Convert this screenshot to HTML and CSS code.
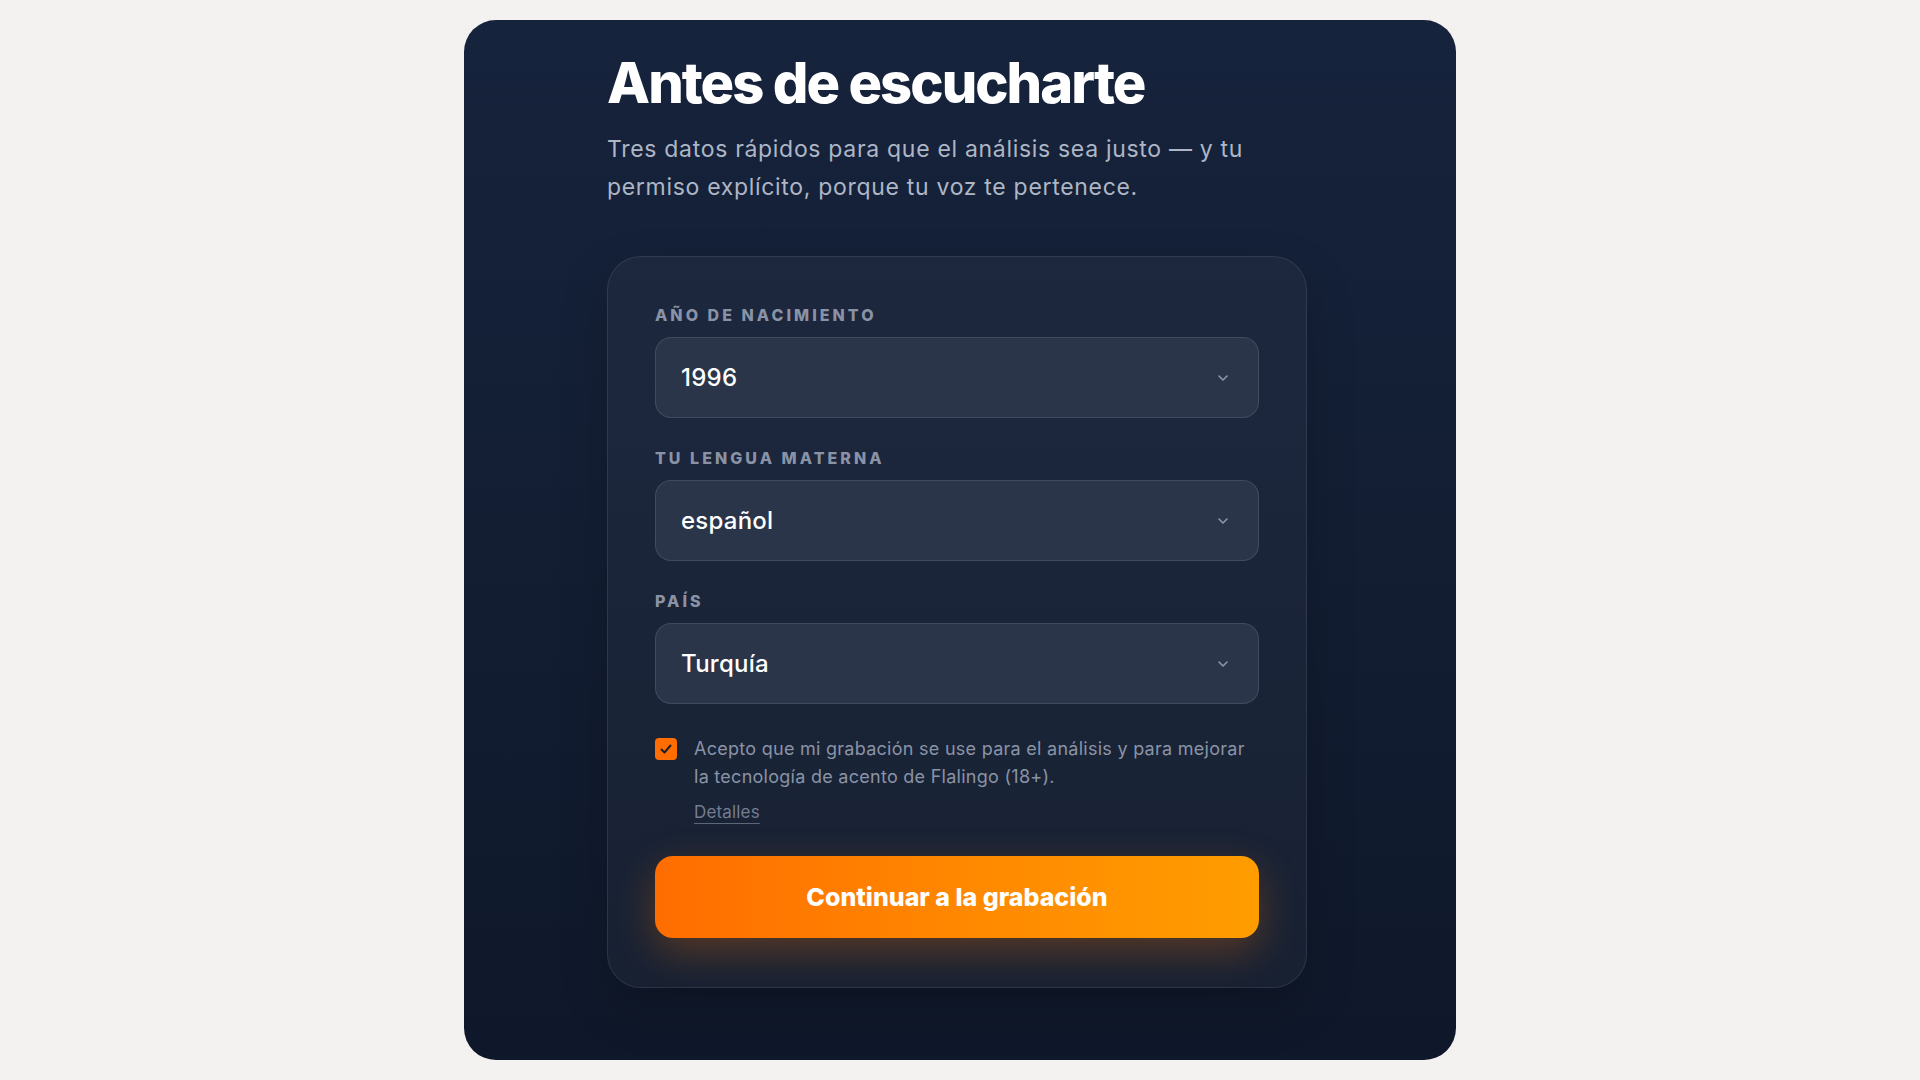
FILE: index.html
```html
<!DOCTYPE html>
<html lang="es">
<head>
    <meta charset="utf-8" />
    <title>Antes de escucharte</title>
    <link rel="stylesheet" href="styles.css">
</head>
<body>
    <div class="screen">
        <div class="content">
            <h1>Antes de escucharte</h1>
            <p class="subtitle">Tres datos rápidos para que el análisis sea justo — y tu permiso explícito, porque tu voz te pertenece.</p>

            <div class="form-card">
                <div class="field">
                    <label>Año de nacimiento</label>
                    <div class="select">
                        <span>1996</span>
                        <svg class="chevron" viewBox="0 0 12 8" width="12" height="8"><path d="M2 2l4 4 4-4" fill="none" stroke="currentColor" stroke-width="1.6" stroke-linecap="round" stroke-linejoin="round"/></svg>
                    </div>
                </div>

                <div class="field">
                    <label>Tu lengua materna</label>
                    <div class="select">
                        <span>español</span>
                        <svg class="chevron" viewBox="0 0 12 8" width="12" height="8"><path d="M2 2l4 4 4-4" fill="none" stroke="currentColor" stroke-width="1.6" stroke-linecap="round" stroke-linejoin="round"/></svg>
                    </div>
                </div>

                <div class="field">
                    <label>País</label>
                    <div class="select">
                        <span>Turquía</span>
                        <svg class="chevron" viewBox="0 0 12 8" width="12" height="8"><path d="M2 2l4 4 4-4" fill="none" stroke="currentColor" stroke-width="1.6" stroke-linecap="round" stroke-linejoin="round"/></svg>
                    </div>
                </div>

                <div class="consent">
                    <span class="checkbox">
                        <svg viewBox="0 0 16 16" width="16" height="16"><path d="M3.5 8.5l3 3 6-7" fill="none" stroke="#1a1f2b" stroke-width="2" stroke-linecap="round" stroke-linejoin="round"/></svg>
                    </span>
                    <div class="consent-text">
                        <p>Acepto que mi grabación se use para el análisis y para mejorar la tecnología de acento de Flalingo (18+).</p>
                        <a href="#" class="details">Detalles</a>
                    </div>
                </div>

                <button class="primary">Continuar a la grabación</button>
            </div>
        </div>
    </div>
</body>
</html>
```

FILE: styles.css
```css
:root {
    --page-bg: #f3f2f0;
    --card-top: #16233c;
    --card-bottom: #0f182a;
    --panel: rgba(255, 255, 255, 0.035);
    --panel-border: rgba(255, 255, 255, 0.09);
    --field: #2a354a;
    --field-border: rgba(255, 255, 255, 0.11);
    --text: #ffffff;
    --text-soft: #aeb6c6;
    --text-muted: #8a93a6;
    --orange: #ff6d00;
    --orange-light: #ff9d00;
}

* {
    box-sizing: border-box;
    margin: 0;
    padding: 0;
}

body {
    background: var(--page-bg);
    font-family: Inter, "Open Sans", sans-serif;
    color: var(--text);
    min-height: 100vh;
}

.screen {
    width: 992px;
    height: 1040px;
    margin: 20px auto;
    border-radius: 32px;
    background: linear-gradient(180deg, var(--card-top) 0%, #131e33 50%, var(--card-bottom) 100%);
    padding: 30px 6px 0 0;
    overflow: hidden;
}

.content {
    width: 700px;
    margin: 0 auto;
}

h1 {
    font-size: 56px;
    font-weight: 800;
    letter-spacing: -0.035em;
    line-height: 1.2;
}

.subtitle {
    margin-top: 13px;
    max-width: 650px;
    font-size: 23px;
    line-height: 38px;
    color: var(--text-soft);
    letter-spacing: 0.03em;
}

.form-card {
    margin-top: 50px;
    padding: 48px 47px 49px;
    background: var(--panel);
    border: 1px solid var(--panel-border);
    border-radius: 34px;
    box-shadow: 0 20px 50px rgba(0, 0, 0, 0.18);
}

.field {
    margin-bottom: 30px;
}

.field label {
    display: block;
    font-size: 16px;
    font-weight: 800;
    letter-spacing: 0.19em;
    text-transform: uppercase;
    color: var(--text-muted);
    line-height: 20px;
    margin-bottom: 12px;
}

.select {
    display: flex;
    align-items: center;
    justify-content: space-between;
    height: 81px;
    padding: 0 29px 0 25px;
    background: var(--field);
    border: 1px solid var(--field-border);
    border-radius: 16px;
    font-size: 24px;
    font-weight: 500;
    letter-spacing: 0.01em;
}

.chevron {
    color: #8d97aa;
}

.consent {
    display: flex;
    gap: 17px;
    margin-top: 31px;
}

.checkbox {
    flex: none;
    width: 22px;
    height: 22px;
    margin-top: 3px;
    border-radius: 4px;
    background: var(--orange);
    display: flex;
    align-items: center;
    justify-content: center;
}

.consent-text p {
    font-size: 18px;
    line-height: 28px;
    color: var(--text-muted);
    letter-spacing: 0.015em;
}

.details {
    display: inline-block;
    margin-top: 11px;
    font-size: 17px;
    color: #737d90;
    letter-spacing: 0.01em;
    text-decoration: underline;
    text-underline-offset: 5px;
    text-decoration-color: #5d677a;
}

.primary {
    display: block;
    width: 100%;
    height: 82px;
    margin-top: 34px;
    border: none;
    border-radius: 18px;
    background: linear-gradient(90deg, var(--orange) 0%, #ff8a00 55%, var(--orange-light) 100%);
    color: #ffffff;
    font-family: Inter, sans-serif;
    font-size: 25px;
    font-weight: 800;
    letter-spacing: 0;
    box-shadow: 0 14px 40px rgba(255, 120, 0, 0.28);
    cursor: pointer;
}
```
